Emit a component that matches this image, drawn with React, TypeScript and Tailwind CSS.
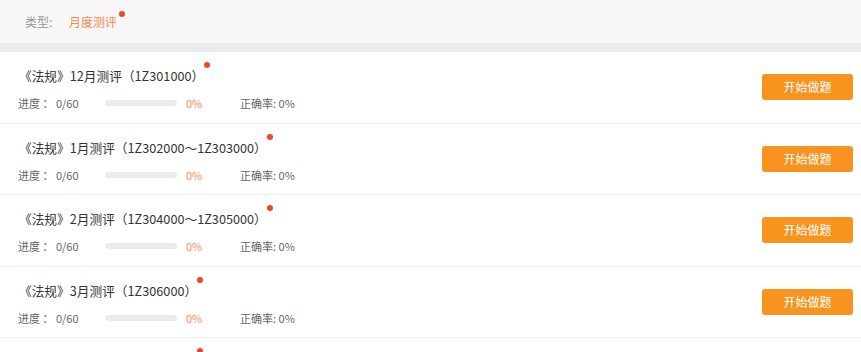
import React from 'react';

type Item = { title: string };

const items: Item[] = [
  { title: '《法规》12月测评（1Z301000）' },
  { title: '《法规》1月测评（1Z302000～1Z303000）' },
  { title: '《法规》2月测评（1Z304000～1Z305000）' },
  { title: '《法规》3月测评（1Z306000）' },
  { title: '《法规》4月测评（1Z307000）' },
];

const Dot: React.FC = () => (
  <span className="absolute -right-[6px] -top-[4px] w-[6px] h-[6px] rounded-full bg-[#f5432a]"></span>
);

const Row: React.FC<{ item: Item }> = ({ item }) => (
  <div className="flex items-center justify-between h-[71.5px] border-b border-[#eeeeee] pl-[18px] pr-[8px]">
    <div className="flex flex-col gap-[8px]">
      <div className="pl-[1px]">
        <span className="relative text-[12.7px] leading-[18px] text-[#333333]">
          {item.title}
          <Dot />
        </span>
      </div>
      <div className="flex items-center text-[11px] leading-[18px] text-[#666666]">
        <span className="w-[87px] whitespace-pre">进度 ： 0/60</span>
        <span className="w-[72px] h-[6px] rounded-full bg-[#ebebeb]"></span>
        <span className="w-[54px] ml-[9px] text-[#fa8c5a]">0%</span>
        <span>正确率: 0%</span>
      </div>
    </div>
    <button className="w-[91px] h-[26px] rounded-[3px] bg-[#f7931e] text-white text-[12px]">
      开始做题
    </button>
  </div>
);

const App: React.FC = () => {
  return (
    <div
      className="w-[861px] h-[352px] overflow-hidden bg-white"
      style={{ fontFamily: '"Noto Sans CJK SC", "Noto Sans", sans-serif' }}
    >
      <div className="h-[43px] bg-[#f7f7f7] flex items-center pl-[25px] text-[12px]">
        <span className="text-[#999999] w-[44px]">类型:</span>
        <span className="relative text-[#f5894a]">
          月度测评
          <span className="absolute -right-[8px] -top-[2px] w-[6px] h-[6px] rounded-full bg-[#f5432a]"></span>
        </span>
      </div>
      <div className="h-[9px] bg-[#e9ebee]"></div>
      {items.map((it, i) => (
        <Row key={i} item={it} />
      ))}
    </div>
  );
};

export default App;
